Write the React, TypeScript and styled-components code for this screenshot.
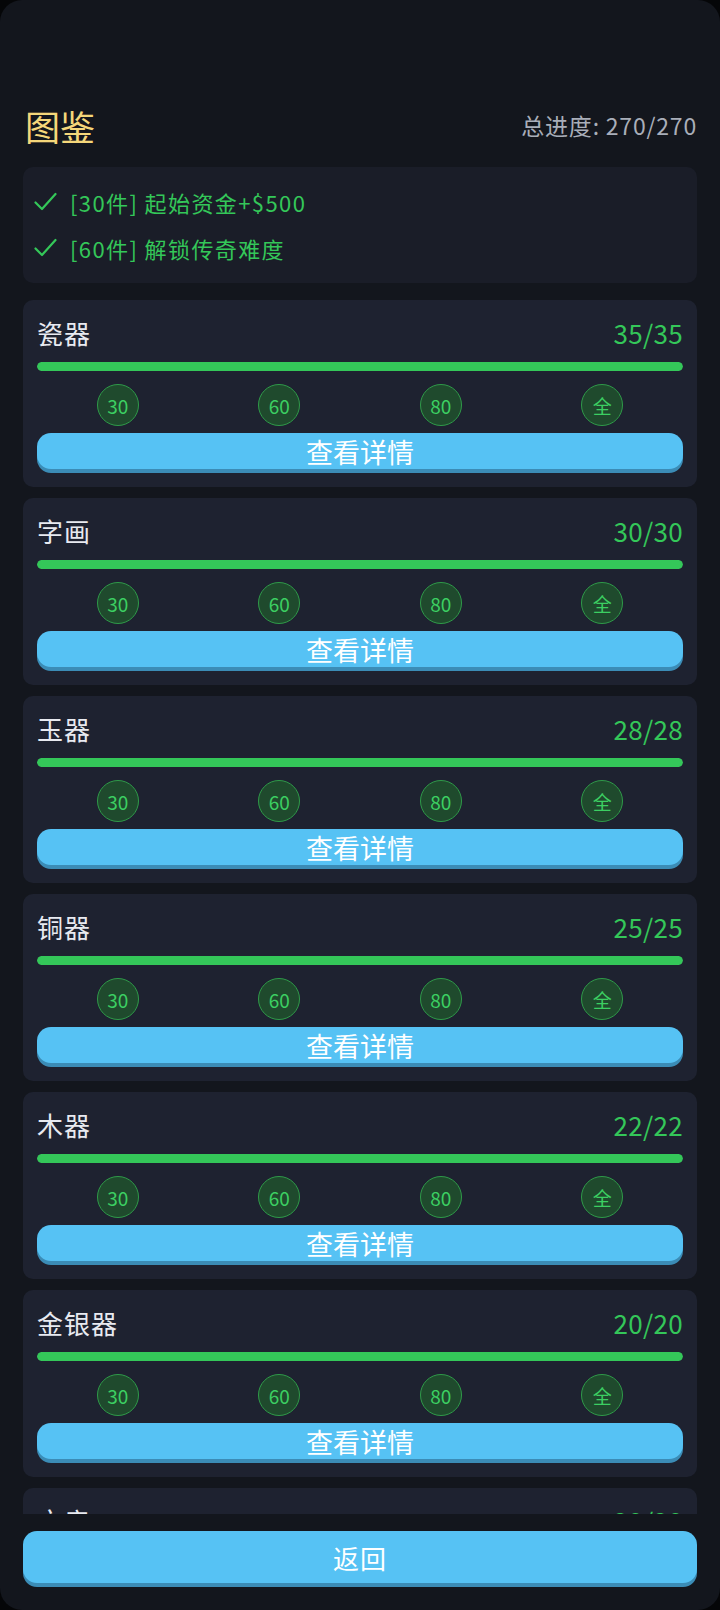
import React from 'react';
import styled, { createGlobalStyle } from 'styled-components';

const GlobalStyle = createGlobalStyle`
  html, body {
    margin: 0;
    padding: 0;
    background: #050608;
  }
  body {
    font-family: "Noto Sans CJK SC", "Noto Sans", sans-serif;
  }
`;

const Screen = styled.div`
  width: 720px;
  height: 1610px;
  box-sizing: border-box;
  background: #13161d;
  border-radius: 22px;
  padding: 101px 23px 23px;
  display: flex;
  flex-direction: column;
  overflow: hidden;
`;

const Header = styled.div`
  height: 48px;
  display: flex;
  align-items: center;
  justify-content: space-between;
  padding-left: 2px;
`;

const Title = styled.div`
  font-size: 35px;
  color: #f5d77a;
  line-height: 1;
`;

const Total = styled.div`
  font-size: 23px;
  letter-spacing: 0.8px;
  color: #a9aeb9;
`;

const Rewards = styled.div`
  margin-top: 18px;
  background: #1a1d28;
  border-radius: 10px;
  padding: 18px 11px;
  display: flex;
  flex-direction: column;
  gap: 12px;
`;

const RewardRow = styled.div`
  height: 34px;
  display: flex;
  align-items: center;
  gap: 13px;
  font-size: 22px;
  letter-spacing: 1.4px;
  color: #34c759;
`;

const List = styled.div`
  margin-top: 17px;
  height: 1214px;
  overflow: hidden;
  display: flex;
  flex-direction: column;
  gap: 11px;
  flex-shrink: 0;
`;

const Card = styled.div`
  background: #1e2230;
  border-radius: 10px;
  padding: 14px 14px 18px;
  flex-shrink: 0;
`;

const CardHead = styled.div`
  height: 36px;
  display: flex;
  align-items: center;
  justify-content: space-between;
`;

const CardName = styled.div`
  font-size: 26px;
  letter-spacing: 1px;
  color: #e8eaf0;
`;

const CardCount = styled.div`
  font-size: 26px;
  letter-spacing: 0.3px;
  color: #34c759;
`;

const Bar = styled.div`
  margin-top: 12px;
  height: 9px;
  border-radius: 5px;
  background: #2a2f3d;
  overflow: hidden;
`;

const Fill = styled.div`
  height: 100%;
  background: #34c759;
  border-radius: 5px;
`;

const Milestones = styled.div`
  margin-top: 13px;
  display: flex;
  justify-content: space-around;
`;

const Badge = styled.div`
  width: 42px;
  height: 42px;
  box-sizing: border-box;
  border-radius: 50%;
  border: 1.5px solid #2f9a49;
  background: #1f4a2d;
  color: #3ccf62;
  display: flex;
  align-items: center;
  justify-content: center;
  font-size: 19px;
`;

const BlueButton = styled.div<{ $h: number }>`
  height: ${p => p.$h}px;
  border-radius: 14px;
  background: #56c2f4;
  box-shadow: 0 4px 0 #3b8cb6;
  color: #ffffff;
  display: flex;
  align-items: center;
  justify-content: center;
`;

const DetailButton = styled(BlueButton)`
  margin-top: 7px;
  font-size: 27px;
`;

const BackButton = styled(BlueButton)`
  margin-top: 17px;
  font-size: 26px;
  letter-spacing: 1px;
  flex-shrink: 0;
`;

const Check = () => (
  <svg width="23" height="20" viewBox="0 0 23 20">
    <path d="M1.5 10.5 L8 17 L21.5 2" fill="none" stroke="#34c759" strokeWidth="2.2" strokeLinecap="round" strokeLinejoin="round" />
  </svg>
);

const categories = [
  { name: '瓷器', got: 35, total: 35 },
  { name: '字画', got: 30, total: 30 },
  { name: '玉器', got: 28, total: 28 },
  { name: '铜器', got: 25, total: 25 },
  { name: '木器', got: 22, total: 22 },
  { name: '金银器', got: 20, total: 20 },
  { name: '文房', got: 20, total: 20 },
];

const marks = ['30', '60', '80', '全'];

export default function App() {
  return (
    <>
      <GlobalStyle />
      <Screen>
        <Header>
          <Title>图鉴</Title>
          <Total>总进度: 270/270</Total>
        </Header>
        <Rewards>
          <RewardRow>
            <Check />
            <span>[30件] 起始资金+$500</span>
          </RewardRow>
          <RewardRow>
            <Check />
            <span>[60件] 解锁传奇难度</span>
          </RewardRow>
        </Rewards>
        <List>
          {categories.map(c => (
            <Card key={c.name}>
              <CardHead>
                <CardName>{c.name}</CardName>
                <CardCount>
                  {c.got}/{c.total}
                </CardCount>
              </CardHead>
              <Bar>
                <Fill style={{ width: `${(c.got / c.total) * 100}%` }} />
              </Bar>
              <Milestones>
                {marks.map(m => (
                  <Badge key={m}>{m}</Badge>
                ))}
              </Milestones>
              <DetailButton $h={36}>查看详情</DetailButton>
            </Card>
          ))}
        </List>
        <BackButton $h={52}>返回</BackButton>
      </Screen>
    </>
  );
}
